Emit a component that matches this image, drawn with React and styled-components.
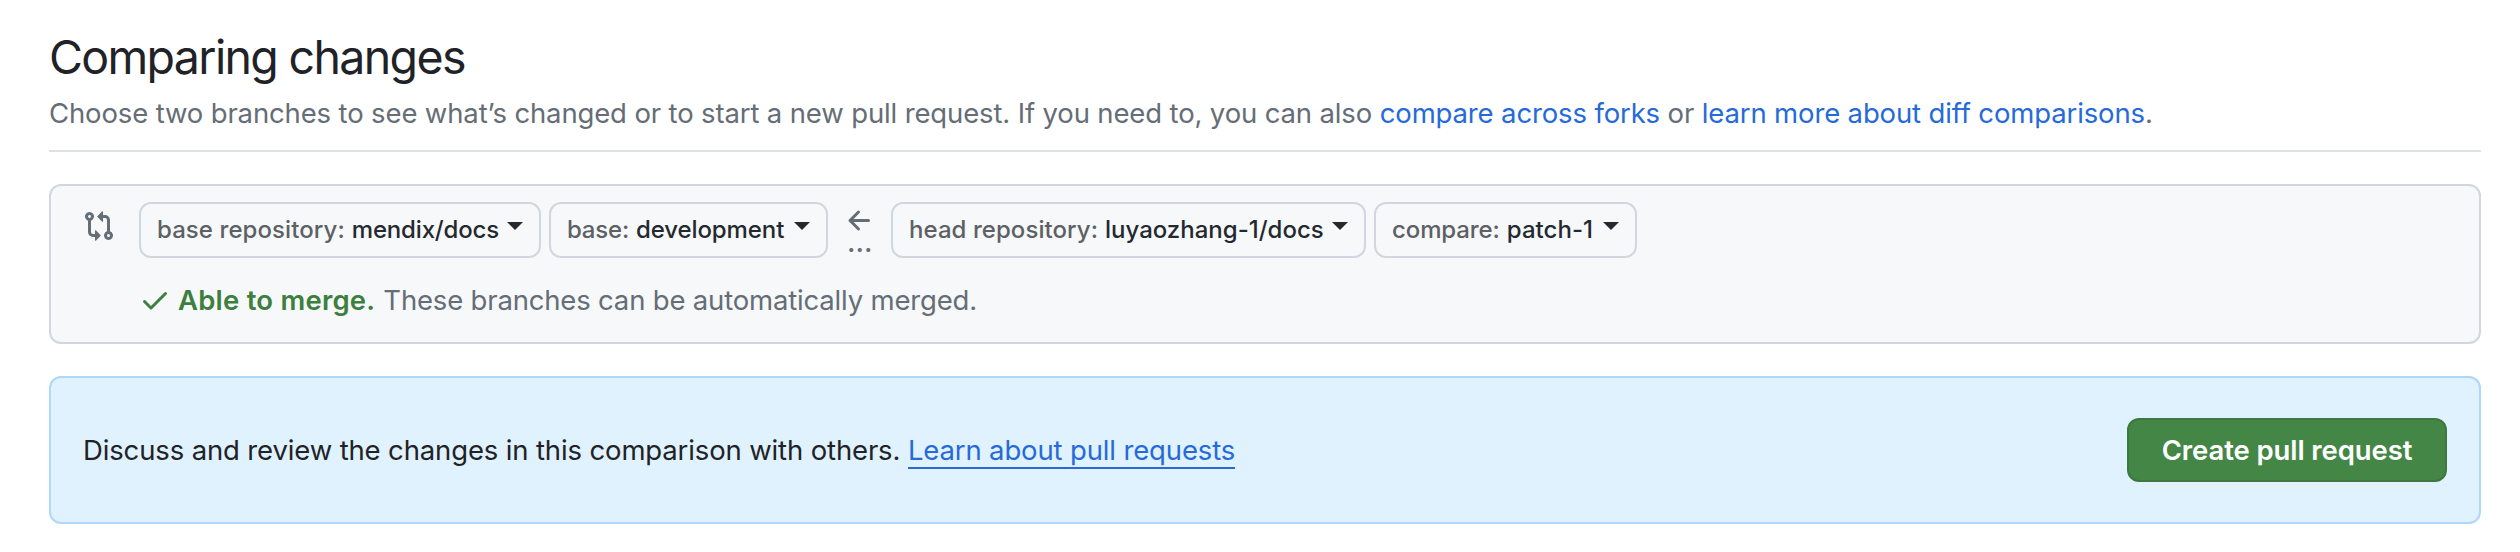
import React from "react";
import styled, { createGlobalStyle } from "styled-components";

const GlobalStyle = createGlobalStyle`
  * { box-sizing: border-box; }
  body {
    margin: 0;
    background: #ffffff;
    color: #1f2328;
    font-family: Inter, "Liberation Sans", sans-serif;
    font-size: 27.5px;
    font-weight: 440;
    line-height: 42px;
    letter-spacing: -0.14px;
  }
`;

const Page = styled.main`
  width: 2520px;
  height: 552px;
  padding: 28px 39px 0 49px;
  white-space: nowrap;
`;

const Header = styled.header`
  height: 124px;
  border-bottom: 2px solid #dce1e6;
  margin-bottom: 32px;
`;

const Title = styled.h1`
  margin: 0;
  font-size: 46.5px;
  font-weight: 440;
  line-height: 58px;
  letter-spacing: -1.66px;
`;

const Subtitle = styled.p`
  margin: 6px 0 0;
  color: #656d76;
`;

const Link = styled.a`
  color: #266ad9;
  text-decoration: none;
  border-bottom: ${(p) => (p.$underlined ? "2px solid #266ad9" : "none")};
`;

const ComparePanel = styled.section`
  height: 160px;
  display: flex;
  align-items: flex-start;
  padding: 16px 32px;
  background: #f6f8fa;
  border: 2px solid #d0d7de;
  border-radius: 12px;
`;

const Icon = styled.svg`
  display: block;
  flex: none;
  width: 32px;
  height: 32px;
  fill: ${(p) => p.$color || "#656d76"};
`;

const CompareIcon = styled(Icon)`
  margin: 8px 24px 0 0;
`;

const CompareBody = styled.div`
  display: flex;
  flex-direction: column;
`;

const Range = styled.div`
  display: flex;
  height: 56px;
`;

const Select = styled.button`
  display: flex;
  align-items: center;
  width: ${(p) => p.$width}px;
  height: 56px;
  margin-right: 8px;
  padding: 0 16px;
  background: #f6f8fa;
  border: 2px solid #d0d7de;
  border-radius: 12px;
  color: #24292f;
  font: 500 24px/40px Inter, "Liberation Sans", sans-serif;
`;

const SelectLabel = styled.span`
  color: #5d6065;
  margin-right: 7px;
  letter-spacing: ${(p) => p.$tracking || 0}px;
`;

const SelectValue = styled.span`
  letter-spacing: ${(p) => p.$tracking || 0}px;
`;

const Caret = styled.span`
  margin: -8px 0 0 auto;
  border: 8px solid transparent;
  border-top-color: #24292f;
  border-bottom: 0;
`;

const Direction = styled.div`
  display: flex;
  flex-direction: column;
  width: 55px;
  padding: 3px 0 0 8px;
`;

const Ellipsis = styled.span`
  color: #656d76;
  font-size: 28px;
  font-weight: 500;
  letter-spacing: 0;
  line-height: 28px;
  margin: -9px 0 0 3px;
`;

const Status = styled.div`
  display: flex;
  align-items: center;
  margin-top: 21px;
  color: #656d76;
  letter-spacing: -0.18px;
`;

const Success = styled.strong`
  margin: 0 8px 0 7px;
  color: #3c7f3e;
  font-weight: 600;
  letter-spacing: 0.22px;
`;

const Notice = styled.section`
  display: flex;
  align-items: center;
  justify-content: space-between;
  height: 148px;
  margin-top: 32px;
  padding: 0 32px;
  background: #dff2fd;
  border: 2px solid #afd7fb;
  border-radius: 12px;
`;

const NoticeText = styled.p`
  margin: 0;
`;

const PrimaryButton = styled.button`
  width: 320px;
  height: 64px;
  padding: 0;
  background: #448646;
  border: 2px solid #3d783f;
  border-radius: 12px;
  color: #ffffff;
  font: 600 27.5px/42px Inter, "Liberation Sans", sans-serif;
  letter-spacing: -0.1px;
`;

function RefSelect({ label, value, width, labelTracking, valueTracking }) {
  return (
    <Select $width={width}>
      <SelectLabel $tracking={labelTracking}>{label}</SelectLabel>
      <SelectValue $tracking={valueTracking}>{value}</SelectValue>
      <Caret />
    </Select>
  );
}

export default function App() {
  return (
    <>
      <GlobalStyle />
      <Page>
        <Header>
          <Title>Comparing changes</Title>
          <Subtitle>
            Choose two branches to see what’s changed or to start a new pull request. If you need to, you can also{" "}
            <Link>compare across forks</Link> or <Link>learn more about diff comparisons</Link>.
          </Subtitle>
        </Header>
        <ComparePanel>
          <CompareIcon viewBox="0 0 16 16">
            <path d="M9.573.677A.25.25 0 0 1 10 .854V2.5h1A2.5 2.5 0 0 1 13.5 5v5.628a2.251 2.251 0 1 1-1.5 0V5a1 1 0 0 0-1-1h-1v1.646a.25.25 0 0 1-.427.177L7.177 3.427a.25.25 0 0 1 0-.354ZM6 12v-1.646a.25.25 0 0 1 .427-.177l2.396 2.396a.25.25 0 0 1 0 .354l-2.396 2.396A.25.25 0 0 1 6 15.146V13.5H5A2.5 2.5 0 0 1 2.5 11V5.372a2.25 2.25 0 1 1 1.5 0V11a1 1 0 0 0 1 1ZM4 3.25a.75.75 0 1 0-1.5.005.75.75 0 0 0 1.5-.005ZM12.75 12a.75.75 0 1 0 0 1.5.75.75 0 0 0 0-1.5Z" />
          </CompareIcon>
          <CompareBody>
            <Range>
              <RefSelect label="base repository:" value="mendix/docs" width={402} labelTracking={0.08} valueTracking={-0.18} />
              <RefSelect label="base:" value="development" width={279} labelTracking={-0.2} valueTracking={-0.1} />
              <Direction>
                <Icon viewBox="0 0 16 16">
                  <path d="M7.78 12.53a.75.75 0 0 1-1.06 0L2.47 8.28a.75.75 0 0 1 0-1.06l4.25-4.25a.751.751 0 0 1 1.042.018.751.751 0 0 1 .018 1.042L4.81 7h7.44a.75.75 0 0 1 0 1.5H4.81l2.97 2.97a.75.75 0 0 1 0 1.06Z" />
                </Icon>
                <Ellipsis>...</Ellipsis>
              </Direction>
              <RefSelect label="head repository:" value="luyaozhang-1/docs" width={475} labelTracking={0.06} />
              <RefSelect label="compare:" value="patch-1" width={263} labelTracking={-0.1} valueTracking={0.05} />
            </Range>
            <Status>
              <Icon viewBox="0 0 16 16" $color="#3c7f3e">
                <path d="M13.78 4.22a.75.75 0 0 1 0 1.06l-7.25 7.25a.75.75 0 0 1-1.06 0L2.22 9.28a.751.751 0 0 1 .018-1.042.751.751 0 0 1 1.042-.018L6 10.94l6.72-6.72a.75.75 0 0 1 1.06 0Z" />
              </Icon>
              <Success>Able to merge.</Success>
              <span>These branches can be automatically merged.</span>
            </Status>
          </CompareBody>
        </ComparePanel>
        <Notice>
          <NoticeText>
            Discuss and review the changes in this comparison with others.{" "}
            <Link $underlined>Learn about pull requests</Link>
          </NoticeText>
          <PrimaryButton>Create pull request</PrimaryButton>
        </Notice>
      </Page>
    </>
  );
}
